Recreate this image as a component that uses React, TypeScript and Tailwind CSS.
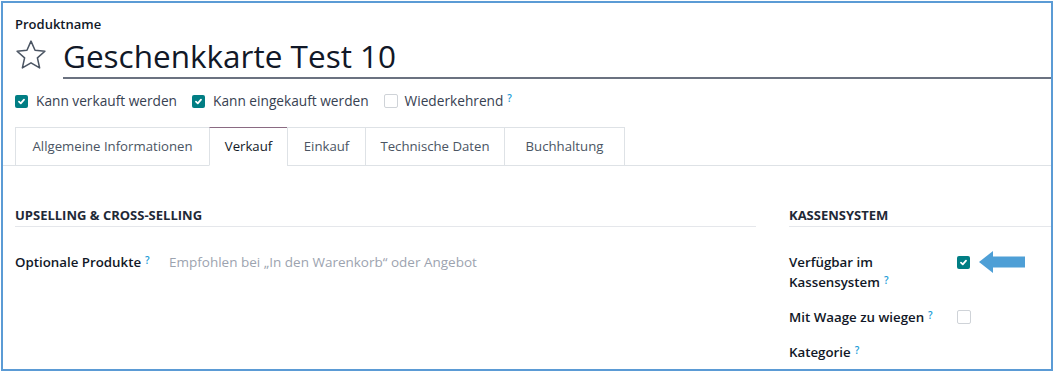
import React from "react";

const Help = () => (
    <sup className="ml-[4px] text-[10px] font-semibold text-[#1a9bd7] relative -top-[3px]">?</sup>
);

const CheckBox = ({ checked }: { checked: boolean }) =>
    checked ? (
        <span className="flex h-[13px] w-[13px] shrink-0 items-center justify-center rounded-[2px] bg-[#017e84]">
            <svg width="9" height="9" viewBox="0 0 10 10" fill="none" stroke="white" strokeWidth="2" strokeLinecap="round" strokeLinejoin="round">
                <path d="M2.2 5.2 L4.2 7.1 L7.8 3" />
            </svg>
        </span>
    ) : (
        <span className="block h-[14px] w-[14px] shrink-0 rounded-[2px] border border-[#cfd3d8] bg-white" />
    );

const tabs = [
    { label: "Allgemeine Informationen", width: "w-[195px]" },
    { label: "Verkauf", width: "w-[79px]" },
    { label: "Einkauf", width: "w-[79px]" },
    { label: "Technische Daten", width: "w-[140px]" },
    { label: "Buchhaltung", width: "w-[121px]" },
];

const App = () => {
    return (
        <div className="h-[374px] w-[1056px] bg-white font-['Open_Sans',sans-serif] text-[#212529]">
            <div className="ml-[1px] mt-[1px] h-[370px] w-[1052px] overflow-hidden border-2 border-[#5b9bd5]">
                {/* header */}
                <div className="pl-[12px] pt-[12px]">
                    <div className="text-[13px] font-semibold leading-[18px] text-[#111827]">Produktname</div>
                    <div className="mt-[3px] flex items-start">
                        <svg width="34" height="32" viewBox="0 0 24 23" fill="none" stroke="#4b5563" strokeWidth="1.1" strokeLinejoin="round" className="-ml-[1px] mt-[3px] shrink-0">
                            <path d="M12 1.5 L14.9 8.1 L22 8.8 L16.6 13.6 L18.2 20.8 L12 17.1 L5.8 20.8 L7.4 13.6 L2 8.8 L9.1 8.1 Z" />
                        </svg>
                        <div className="ml-[15px] flex-1 border-b-2 border-[#6b7280] pb-[1px] text-[31.5px] leading-[40px] text-[#111827]">
                            Geschenkkarte Test 10
                        </div>
                    </div>
                    <div className="mt-[13px] flex items-center text-[13.7px] font-medium leading-[18px] text-[#374151]">
                        <CheckBox checked />
                        <span className="ml-[8px]">Kann verkauft werden</span>
                        <span className="ml-[15px]"><CheckBox checked /></span>
                        <span className="ml-[8px]">Kann eingekauft werden</span>
                        <span className="ml-[15px]"><CheckBox checked={false} /></span>
                        <span className="ml-[7px]">Wiederkehrend</span>
                        <Help />
                    </div>
                </div>

                {/* tabs */}
                <div className="mt-[17px] flex border-b border-[#dee2e6] pl-[12px]">
                    {tabs.map((t) => {
                        const active = t.label === "Verkauf";
                        return (
                            <div
                                key={t.label}
                                className={`${t.width} -mb-px -ml-px border py-[9px] text-center text-[13.2px] leading-[19px] first:ml-0 ${
                                    active
                                        ? "border-[#dee2e6] border-t-[#8a6a82] border-b-white bg-white text-[#111827]"
                                        : "border-[#dee2e6] text-[#4b5563]"
                                }`}
                            >
                                {t.label}
                            </div>
                        );
                    })}
                </div>

                {/* body */}
                <div className="mt-[40px] flex pl-[12px]">
                    <div className="w-[741px]">
                        <div className="border-b border-[#e5e7eb] pb-[2px] text-[13px] font-bold leading-[18px] text-[#1f2937]">
                            UPSELLING &amp; CROSS-SELLING
                        </div>
                        <div className="mt-[25px] flex text-[13.3px] leading-[20px]">
                            <div className="w-[154px] font-semibold text-[#111827]">
                                Optionale Produkte
                                <Help />
                            </div>
                            <div className="text-[13.5px] text-[#9ca3af]">Empfohlen bei „In den Warenkorb“ oder Angebot</div>
                        </div>
                    </div>
                    <div className="ml-[33px] flex-1">
                        <div className="border-b border-[#e5e7eb] pb-[2px] text-[13px] font-bold leading-[18px] text-[#1f2937]">
                            KASSENSYSTEM
                        </div>
                        <div className="mt-[25px] flex text-[13.3px] font-semibold leading-[20px] text-[#111827]">
                            <div className="w-[168px]">
                                Verfügbar im
                                <br />
                                Kassensystem
                                <Help />
                            </div>
                            <div className="flex h-[20px] items-center">
                                <CheckBox checked />
                                <svg width="46" height="22" viewBox="0 0 46 22" className="ml-[9px]">
                                    <path d="M0 11 L14 0 L14 5.5 L46 5.5 L46 16.5 L14 16.5 L14 22 Z" fill="#4e9fd6" />
                                </svg>
                            </div>
                        </div>
                        <div className="mt-[15px] flex items-center text-[13.3px] font-semibold leading-[20px] text-[#111827]">
                            <div className="w-[168px]">
                                Mit Waage zu wiegen
                                <Help />
                            </div>
                            <CheckBox checked={false} />
                        </div>
                        <div className="mt-[15px] text-[13.3px] font-semibold leading-[20px] text-[#111827]">
                            Kategorie
                            <Help />
                        </div>
                    </div>
                </div>
            </div>
        </div>
    );
};

export default App;
